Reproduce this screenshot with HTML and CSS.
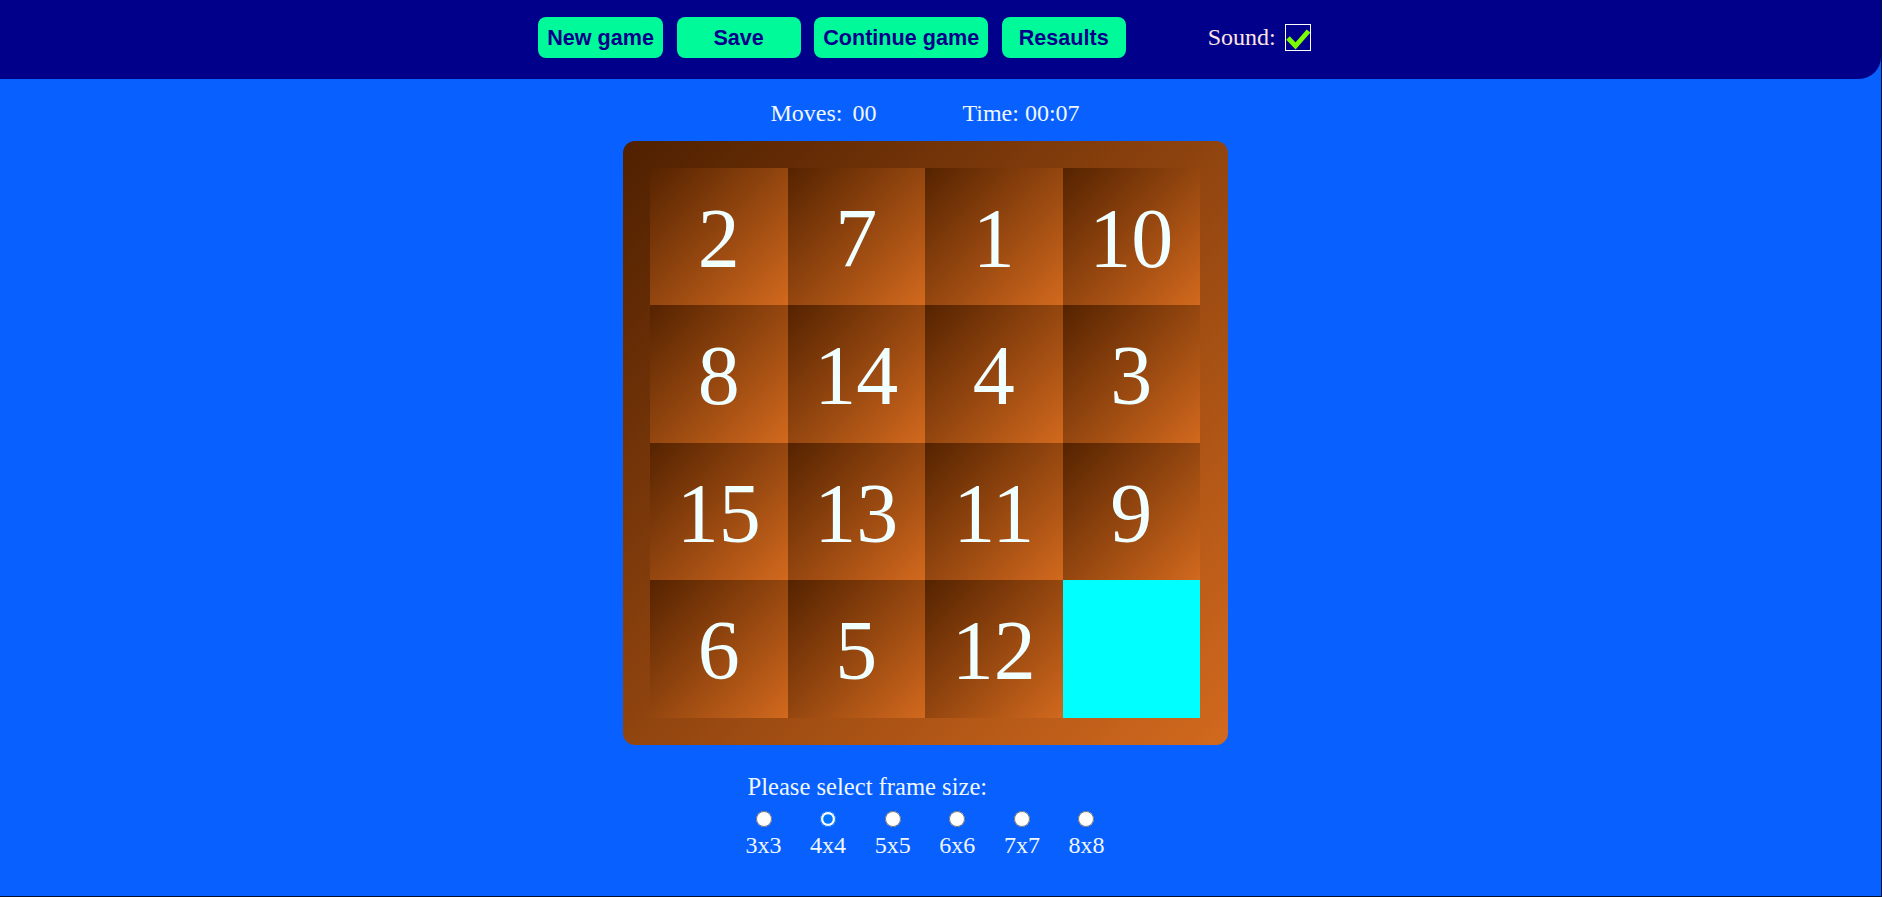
FILE: index.html
```html
<!DOCTYPE html>
<html lang="en">
<head>
<meta charset="utf-8">
<title>Gem Puzzle</title>
<link rel="stylesheet" href="styles.css">
</head>
<body>
<header class="topbar">
  <div class="controls">
    <button class="btn">New game</button>
    <button class="btn">Save</button>
    <button class="btn">Continue game</button>
    <button class="btn">Resaults</button>
  </div>
  <label class="sound">Sound:
    <span class="checkbox">
      <svg width="24" height="25" viewBox="0 0 24 25"><polyline points="2,13 9.5,21 22.5,6" fill="none" stroke="#7cfc00" stroke-width="4.8" stroke-linecap="butt" stroke-linejoin="miter"/></svg>
    </span>
  </label>
</header>
<main class="main">
  <div class="stats">
    <span class="stat">Moves:<span class="moves-val">00</span></span>
    <span class="stat">Time: 00:07</span>
  </div>
  <div class="board">
    <div class="tile">2</div>
    <div class="tile">7</div>
    <div class="tile">1</div>
    <div class="tile">10</div>
    <div class="tile">8</div>
    <div class="tile">14</div>
    <div class="tile">4</div>
    <div class="tile">3</div>
    <div class="tile">15</div>
    <div class="tile">13</div>
    <div class="tile">11</div>
    <div class="tile">9</div>
    <div class="tile">6</div>
    <div class="tile">5</div>
    <div class="tile">12</div>
    <div class="tile empty"></div>
  </div>
  <div class="sizes">
    <div class="sizes-title">Please select frame size:</div>
    <div class="sizes-row">
      <label class="size"><input type="radio" name="size"><span>3x3</span></label>
      <label class="size"><input type="radio" name="size" checked><span>4x4</span></label>
      <label class="size"><input type="radio" name="size"><span>5x5</span></label>
      <label class="size"><input type="radio" name="size"><span>6x6</span></label>
      <label class="size"><input type="radio" name="size"><span>7x7</span></label>
      <label class="size"><input type="radio" name="size"><span>8x8</span></label>
    </div>
  </div>
</main>
</body>
</html>
```
FILE: styles.css
```css
html, body {
  margin: 0;
  padding: 0;
  height: 100%;
}

body {
  box-sizing: border-box;
  background: #0860fe;
  border-right: 1px solid #031230;
  border-bottom: 1px solid #031230;
  font-family: "Liberation Serif", "Times New Roman", serif;
  overflow: hidden;
}

.topbar {
  box-sizing: border-box;
  height: 79px;
  padding: 0 32px 4px 0;
  background: #00008b;
  border-bottom-right-radius: 22px;
  display: flex;
  align-items: center;
  justify-content: center;
}

.controls {
  display: flex;
  gap: 13.6px;
}

.btn {
  box-sizing: border-box;
  min-width: 124px;
  height: 41px;
  padding: 0 9px;
  border: none;
  border-radius: 8px;
  background: #00fa9a;
  color: #00008b;
  font-family: "Liberation Sans", Arial, sans-serif;
  font-weight: bold;
  font-size: 21.6px;
  cursor: pointer;
}

.sound {
  margin-left: 82px;
  display: flex;
  align-items: center;
  gap: 9px;
  color: #ffe4e1;
  font-size: 24px;
}

.checkbox {
  box-sizing: border-box;
  width: 26px;
  height: 27px;
  border: 1px solid #ffffff;
  display: flex;
  align-items: center;
  justify-content: center;
}

.main {
  padding-right: 31px;
  display: flex;
  flex-direction: column;
  align-items: center;
}

.stats {
  margin-top: 21px;
  display: flex;
  gap: 86px;
  color: #f0f8ff;
  font-size: 24px;
  line-height: 27.6px;
}

.moves-val {
  margin-left: 10px;
}

.board {
  box-sizing: border-box;
  margin-top: 13px;
  width: 605px;
  height: 604px;
  padding: 27px 27.5px;
  border-radius: 12px;
  background: linear-gradient(to bottom right, #4f2000, #d2691e);
  display: grid;
  grid-template-columns: repeat(4, 137.5px);
  grid-template-rows: repeat(4, 137.5px);
}

.tile {
  box-sizing: border-box;
  padding-top: 5px;
  display: flex;
  align-items: center;
  justify-content: center;
  background: linear-gradient(to bottom right, #552300, #d2691e);
  color: #f0ffff;
  font-size: 84px;
  line-height: 1;
}

.tile.empty {
  background: #00ffff;
}

.sizes {
  margin-top: 28px;
  width: 359px;
  color: #f0f8ff;
  font-size: 24px;
}

.sizes-title {
  padding-left: 2px;
  font-size: 24.6px;
  line-height: 27.6px;
}

.sizes-row {
  margin-top: 11px;
  display: flex;
  gap: 28.6px;
}

.size {
  width: 36px;
  display: flex;
  flex-direction: column;
  align-items: center;
}

.size input {
  width: 16px;
  height: 16px;
  margin: 0;
}

.size span {
  margin-top: 5px;
  line-height: 27.6px;
}
```
